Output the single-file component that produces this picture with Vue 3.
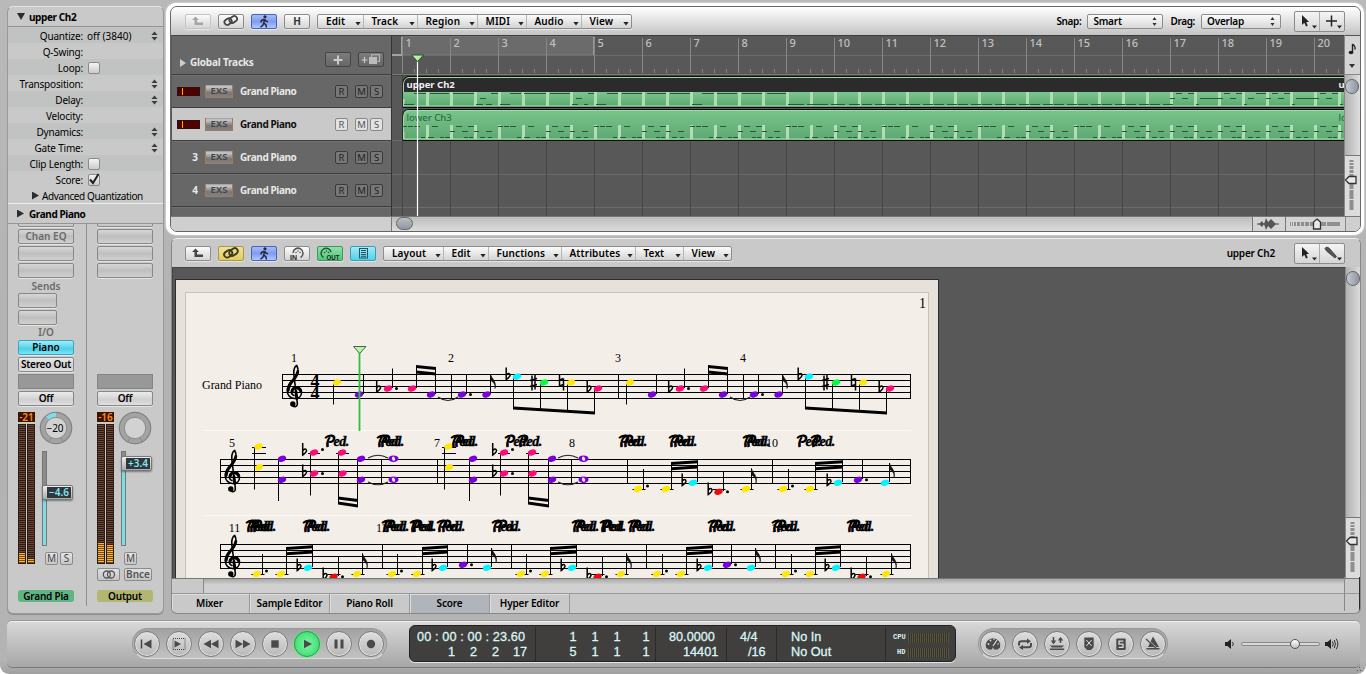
<script setup>
const params = [
  { label: 'Quantize:', value: 'off (3840)', step: true },
  { label: 'Q-Swing:' },
  { label: 'Loop:', check: 'off' },
  { label: 'Transposition:', step: true },
  { label: 'Delay:', step: true },
  { label: 'Velocity:' },
  { label: 'Dynamics:', step: true },
  { label: 'Gate Time:', step: true },
  { label: 'Clip Length:', check: 'off' },
  { label: 'Score:', check: 'on' },
]
const strips = [
  { id: 'inst', eq: 'Chan EQ', sends: true, out: true, peak: '-21', pan: '−20', db: '−4.6', thumb: 33, lit: [10, 4], solo: true, name: 'Grand Pia' },
  { id: 'out', eq: '', sends: false, out: false, peak: '-16', pan: '', db: '+3.4', thumb: 4, lit: [20, 18], solo: false, name: 'Output' },
]
const arrangeMenus = [['Edit', 45], ['Track', 54], ['Region', 60], ['MIDI', 49], ['Audio', 55], ['View', 50]]
const scoreMenus = [['Layout', 59], ['Edit', 45], ['Functions', 73], ['Attributes', 74], ['Text', 48], ['View', 48]]
const tracks = [
  { red: true, sel: false },
  { red: true, sel: true },
  { num: '3', sel: false },
  { num: '4', sel: false },
]
const bars = Array.from({ length: 20 }, (_, i) => i)
const ticks = Array.from({ length: 79 }, (_, i) => i).filter(i => i % 4)
const pillars = Array.from({ length: 39 }, (_, i) => 34 + i * 24)

/* note dashes, [x1, x2, y] relative to the timeline */
const T = 58.5
const M = 63.5
const B = 69.5
const topDashes = [[24, 36], [40, 59], [63, 84], [101, 108], [120, 131], [134, 156], [160, 180], [198, 204], [217, 228], [232, 252], [257, 276], [280, 300], [312, 324], [327, 347], [352, 372], [377, 396]]
const lowDashes = [[14, 24], [86, 93], [96, 102], [110, 120], [182, 188], [194, 198], [206, 216], [302, 312], [398, 414], [417, 438], [441, 455], [459, 470]]
const upper = [
  ...topDashes.map(s => [s[0], s[1], T]),
  ...lowDashes.map(s => [s[0], s[1], B]),
  [90, 96, M], [186, 192, M],
]
for (let x = 470; x < 774; x += 24) upper.push([x + 2, x + 12, B], [x + 15, x + 25, B])
for (let k = 0; k < 4; k++) {
  const x = 780 + k * 48
  upper.push([x + 6, x + 12, T], [x + 18, x + 24, T], [x, x + 5, M], [x + 12, x + 18, M])
  if (k % 2 === 0) upper.push([x + 30, x + 48, M])
  else upper.push([x + 30, x + 36, M], [x + 38, x + 48, T])
  upper.push([x + 26, x + 29, B])
}
const lower = []
const LT = 91.5
const LM = 96.5
const LB = 102.5
for (let k = 0; k < 20; k++) {
  const x = 12 + k * 48
  if (k < 16 && k % 2 === 0) {
    lower.push([x, x + 5, LT], [x + 6, x + 11, LT], [x + 12, x + 18, LT], [x + 30, x + 36, LT])
    lower.push([x + 19, x + 23, LB], [x + 26, x + 32, LB], [x + 38, x + 42, LB], [x + 43, x + 48, LB])
  } else {
    lower.push([x + 6, x + 12, LT], [x + 18, x + 24, LT], [x, x + 5, LM], [x + 12, x + 18, LM], [x + 24, x + 29, LM], [x + 36, x + 42, LM])
    lower.push([x + 14, x + 18, LB], [x + 19, x + 23, LB], [x + 30, x + 35, LB], [x + 38, x + 42, LB])
  }
}

/* score */
const Y = '#ffe800', P = '#7a00dc', K = '#ff0a78', C = '#00f4ff', G = '#00ff3c', R = '#f00a0a'
const heads = [], stems = [], dots = [], beams = [], flags = [], ledgers = [], ties = [], wholes = [], acc = [], barlines = []
const head = (x, y, c) => heads.push({ x, y, c })
const stem = (x, a, b) => stems.push({ x, a, b })
const beam = (x1, y1, x2, y2, h = 3) => beams.push(`${x1 - 0.5},${y1} ${x2 + 0.5},${y2} ${x2 + 0.5},${y2 + h} ${x1 - 0.5},${y1 + h}`)
const run = (x1) => { /* eighth-note group of four */
  acc.push({ t: 'flat', x: x1 - 8, y: 376 })
  for (const [d, ny, c] of [[0, 376.5, C], [27, 382.5, G], [54, 382.5, Y], [81, 388.5, K]]) {
    head(x1 + 3.5 + d, ny, c)
    stem(x1 + d, ny, 408 + d * 0.06)
  }
  acc.push({ t: 'sharp', x: x1 + 17, y: 382.5 }, { t: 'nat', x: x1 + 45.5, y: 382.5 }, { t: 'flat', x: x1 + 73, y: 388.5 })
  beam(x1, 406.5, x1 + 81, 411.5)
}
const phraseA = (o) => {
  acc.push({ t: 'flat', x: 376 + o, y: 388.5 })
  head(388 + o, 388.5, K); stem(392.5 + o, 388, 368.5); dots.push([396.5 + o, 388.5])
  head(412 + o, 388.5, K); stem(416.5 + o, 388, 365.5); head(431 + o, 394.5, P); stem(435.5 + o, 394, 367)
  beam(416.5 + o, 365, 435.5 + o, 367); beam(416.5 + o, 370.5, 435.5 + o, 372.5)
  barlines.push([451.5 + o, 374, 399])
  ties.push(`M${438 + o} 397 Q${448 + o} 404 ${458 + o} 397`)
  head(462 + o, 394.5, P); stem(466.5 + o, 394, 374); dots.push([470.5 + o, 394.5])
  head(486.5 + o, 394.5, P); stem(490.5 + o, 394, 374); flags.push([490.5 + o, 374])
}
head(337, 382.5, Y); stem(333.5, 383, 404.5); head(359, 394.5, P); stem(363.5, 394, 374)
phraseA(0); run(513.5)
barlines.push([618.5, 374, 399])
head(630, 382.5, Y); stem(626.5, 383, 404.5); head(652, 394.5, P); stem(656.5, 394, 374)
phraseA(292); run(805.5)

const phraseB = (o, p) => {
  head(258.5 + o, 446.5, Y); head(259 + o, 467.3, Y); stem(254.5 + o, 447, 489.5)
  ledgers.push([252 + o, 266 + o, 447.5], [252 + o, 266 + o, 453.5])
  head(282 + o + p, 458.7, P); head(282 + o + p, 479.7, P); stem(278.5 + o + p, 459, 501)
  acc.push({ t: 'flat', x: 302 + o, y: 451.5 }, { t: 'flat', x: 302 + o, y: 473 })
  head(314 + o, 452.5, K); head(314 + o, 473.5, K); stem(310.5 + o, 453, 495.5)
  dots.push([322.5 + o, 449.5], [322.5 + o, 473.5]); ledgers.push([308 + o, 320 + o, 453.5])
  head(342 + o, 452.5, K); head(342.5 + o, 473.5, K); stem(338.5 + o, 453, 503.5); ledgers.push([336 + o, 349 + o, 453.5])
  const q = o ? 1 : 0
  head(361 + o + q, 458.7, P); head(361 + o + q, 479.7, P); stem(357.5 + o + q, 459, 506)
  beam(338.5 + o, 496.5, 357.5 + o + q, 499); beam(338.5 + o, 501.5, 357.5 + o + q, 504.5)
  ties.push(`M${368 + o} 458 Q${378 + o} 452.5 ${388 + o} 458`, `M${368 + o} 482 Q${378 + o} 487.5 ${388 + o} 482`)
  wholes.push([393.5 + o, 458.7], [393.5 + o, 479.7])
  barlines.push([381.5 + o, 459, 484])
}
phraseB(0, 0); phraseB(190, 1)
barlines.push([437.5, 459, 484], [627.5, 459, 484], [772.5, 459, 484])

/* low phrases: dotted + beamed pair, then a red or a purple/cyan ending */
const low = (s1, s2, s3, s4, s5, red, d) => {
  const led = s => ledgers.push([s - 11, s + 2, 489.5 + d])
  head(s1 - 5.5, 489 + d, Y); stem(s1, 489 + d, 469 + d); dots.push([s1 + 4, 486 + d]); led(s1)
  head(s2 - 5.5, 489 + d, Y); stem(s2, 489 + d, 463 + d); led(s2)
  acc.push({ t: 'flat', x: s3 - 16, y: 482 + d })
  head(s3 - 4.5, 482.7 + d, C); stem(s3, 482 + d, 460.5 + d)
  beam(s2, 462 + d, s3, 460.3 + d); beam(s2, 467.3 + d, s3, 465.5 + d)
  if (red) {
    acc.push({ t: 'flat', x: s4 - 16, y: 491 + d })
    head(s4 - 5, 491.7 + d, R); stem(s4, 491 + d, 472 + d); dots.push([s4 + 4, 491.7 + d]); led(s4)
    head(s5 - 5.5, 489 + d, Y); stem(s5, 489 + d, 468.5 + d); led(s5); flags.push([s5, 468.5 + d])
  } else {
    head(s4 - 4.5, 479.7 + d, P); stem(s4, 479 + d, 460 + d); dots.push([s4 + 4, 479.7 + d])
    head(s5 - 4.5, 482.7 + d, C); stem(s5, 482 + d, 463 + d); flags.push([s5, 463 + d])
  }
}
low(643.5, 671.5, 697.5, 723.5, 751.5, true, 0)
low(788.5, 815.5, 842.5, 862.5, 889.5, false, 0)
low(262.5, 286.5, 312.5, 338.5, 362.5, true, 85)
low(397.5, 422.5, 447.5, 467.5, 491.5, false, 85)
low(526.5, 550.5, 576.5, 602.5, 626.5, true, 85)
low(662.5, 686.5, 712.5, 731.5, 755.5, false, 85)
low(791.5, 815.5, 840.5, 866.5, 891.5, true, 85)
barlines.push([382.5, 544, 569], [511.5, 544, 569], [646.5, 544, 569], [775.5, 544, 569])

const staves = [[282, 374.5], [220, 459.5], [220, 544.5]]
const measures = [['1', 294, 362], ['2', 451, 362], ['3', 618, 362], ['4', 743, 362], ['5', 232, 447], ['7', 437, 447], ['8', 572, 447], ['10', 772, 447], ['11', 234.5, 532], ['12', 382, 532], ['14', 777, 532]]
const pedRow2 = [325, 377, 380, 451, 454, 505, 518, 619, 623, 669, 673, 743, 746, 797, 811]
const pedRow3 = [246, 249, 252, 303, 306, 382, 385, 410, 412, 437, 441, 492, 497, 572, 575, 600, 602, 628, 631, 708, 712, 772, 776, 847, 850]
const peds = [...pedRow2.map(x => [x - 1, 446]), ...pedRow3.map(x => [x - 1, 531])]
const accPath = {
  flat: 'M.7 -8.5V3.5C3.5 1.8 5.4 -.5 4.1 -2C3 -3.1 1.5 -2 .7 -.8',
  sharp: 'M1.5 -7V8M4.5 -8V7M-.5 -2L6.5 -4M-.5 4L6.5 2',
  nat: 'M.5 -8V3.5L4.5 2M.5 -2.5L4.5 -4M4.5 -4V8',
}
const clef = 'M5.5 29.5C6 33.5 11.5 33 10.8 28.5L7.3 0C6.8 -5 8.5 -8.5 10.2 -9C12.5 -5 11.5 0 8 4C4 8.5 .8 11 .8 16.5C.8 21 4 24 8.3 24C12.5 24 15 21.5 15 18C15 14.5 12.5 12.5 10 12.5C7 12.5 4.8 14.5 4.8 17C4.8 19 6 20.5 7.5 21'
const clefBold = 'M11.3 -3C10.5 1.5 8 4.3 5.5 7C3 9.7 1.6 12.5 1.6 16M14.3 17C13.5 14 11.5 13.2 9.5 13.3C7.5 13.4 5.6 15 5.7 17.5M9.4 17L10.3 24'
</script>

<template>
  <div class="app">
    <div class="top">
      <aside class="side">
        <div class="shead"><i class="tri down"></i>upper Ch2</div>
        <div class="params">
          <div v-for="p in params" :key="p.label" class="prow">
            <span class="pl">{{ p.label }}</span>
            <span v-if="p.check" class="chk"><svg v-if="p.check === 'on'" width="14" height="14"><path d="M3 6.5L6 10L11.5 1" fill="none" stroke="#222" stroke-width="2" /></svg></span>
            <span v-else class="pv">{{ p.value }}</span>
            <svg v-if="p.step" class="stp" width="7" height="10"><path d="M3.5 .5L6.5 4H.5ZM3.5 9.5L6.5 6H.5Z" fill="#3c3c3c" /></svg>
          </div>
          <div class="prow adv"><i class="tri"></i>Advanced Quantization</div>
        </div>
        <div class="shead second"><i class="tri"></i>Grand Piano</div>
        <div class="strips">
          <div v-for="s in strips" :key="s.id" class="strip" :class="s.id">
            <div class="slot stub"></div>
            <div class="slot dim">{{ s.eq }}</div>
            <div class="slot"></div>
            <div class="slot"></div>
            <div class="mid">
              <template v-if="s.sends">
                <div class="cap">Sends</div>
                <div class="slot half"></div>
                <div class="slot half"></div>
                <div class="cap io">I/O</div>
                <div class="slot cyan">Piano</div>
                <div class="slot white">Stereo Out</div>
              </template>
            </div>
            <div class="group"></div>
            <div class="slot white">Off</div>
            <div class="fad">
              <div class="meterbox">
                <div class="peak">{{ s.peak }}</div>
                <div class="meters">
                  <div v-for="(l, i) in s.lit" :key="i" class="meter"><div class="lit" :style="{ height: l + 'px' }"></div></div>
                </div>
              </div>
              <div class="fright">
                <svg class="knob" width="34" height="34" viewBox="-17 -17 34 34">
                  <circle r="15.7" fill="#a3a3a3" stroke="#828282" stroke-width="1.2" />
                  <path v-if="s.pan" d="M-10 -11.4A15 15 0 0 1 0 -15.2V-10A10 10 0 0 0 -6.9 -7.5Z" fill="#7fdbe8" />
                  <path d="M-5 10L-7.5 14M5 10L7.5 14" stroke="#868686" />
                  <circle r="10.7" fill="#d2d2d2" stroke="#8a8a8a" />
                </svg>
                <span class="panv">{{ s.pan }}</span>
                <div class="track">
                  <div class="fill" :style="{ top: s.thumb + 'px' }"></div>
                  <div class="thumb" :style="{ top: s.thumb + 'px' }"><b>{{ s.db }}</b></div>
                </div>
                <div class="ms"><span class="sq">M</span><span v-if="s.solo" class="sq">S</span></div>
              </div>
            </div>
            <div class="bounce">
              <template v-if="!s.solo">
                <span class="bb l"><svg width="14" height="9"><g fill="none" stroke="#555" stroke-width="1.3"><circle cx="4.8" cy="4.5" r="3.5" /><circle cx="9" cy="4.5" r="3.5" /></g></svg></span>
                <span class="bb">Bnce</span>
              </template>
            </div>
            <div class="nm">{{ s.name }}</div>
          </div>
        </div>
      </aside>

      <main class="main">
        <section class="focus">
          <div class="arr">
            <div class="bar a">
              <span class="btn off"><svg width="14" height="10"><path d="M4.5 .5L8 4H6V6.5H12V9H3.5V4H1Z" fill="#a5a5a5" /></svg></span>
              <span class="btn"><svg width="16" height="14" viewBox="0 0 16 14"><g fill="none" stroke="#444" stroke-width="1.8"><rect x="1.5" y="5" width="7.5" height="5.5" rx="2.7" transform="rotate(-35 5 8)" /><rect x="6.5" y="3" width="8" height="5.5" rx="2.7" transform="rotate(-35 10 6)" /></g></svg></span>
              <span class="btn blue"><svg width="12" height="13" viewBox="0 0 12 13"><circle cx="7" cy="1.8" r="1.6" fill="#24283c" /><path d="M6.5 4L5.8 8L8 10L8.5 12.5M5.8 8L4.8 10.3L2.5 12.3M6.3 4.2L3.3 5.6L3 7.5M6.8 4.5L8 6.2L10 6.8" fill="none" stroke="#24283c" stroke-width="1.5" /></svg></span>
              <span class="btn">H</span>
              <span class="menus"><span v-for="m in arrangeMenus" :key="m[0]" class="mn" :style="{ width: m[1] + 'px' }">{{ m[0] }}<i></i></span></span>
              <span class="grow"></span>
              <span class="lb">Snap:</span><span class="sel s1">Smart<svg width="5" height="9"><path d="M2.5 0L4.5 3H.5ZM2.5 9L4.5 6H.5Z" fill="#333" /></svg></span>
              <span class="lb">Drag:</span><span class="sel s2">Overlap<svg width="5" height="9"><path d="M2.5 0L4.5 3H.5ZM2.5 9L4.5 6H.5Z" fill="#333" /></svg></span>
              <span class="tools">
                <span><svg width="24" height="18"><path d="M7 3V13L9.3 10.8L11 14.6L12.8 13.8L11.2 10.2L14 9.8Z" fill="#222" /><path d="M17 13.5h5l-2.5 3z" fill="#222" /></svg></span>
                <span><svg width="24" height="18"><path d="M11.5 3.5V14.5M6 9H17" stroke="#222" stroke-width="1.5" /><path d="M17 13.5h5l-2.5 3z" fill="#222" /></svg></span>
              </span>
            </div>
            <div class="abody">
              <div class="heads">
                <div class="glob"><i></i>Global Tracks<span class="grow"></span>
                  <span class="gb"><svg width="10" height="10"><path d="M5 .5V9.5M.5 5H9.5" stroke="#ccc" stroke-width="2" /></svg></span>
                  <span class="gb"><svg width="20" height="11"><path d="M.5 6H6.5M3.5 3V9" stroke="#ccc" stroke-width="1.2" /><rect x="10.5" y=".8" width="8" height="6.5" fill="none" stroke="#bbb" /><rect x="8" y="3" width="8" height="7" fill="#bbb" /></svg></span>
                </div>
                <div v-for="(t, i) in tracks" :key="i" class="trk" :class="{ sel2: t.sel }">
                  <span class="tn"><i v-if="t.red" class="red"></i>{{ t.num }}</span>
                  <span class="exs">EXS</span>
                  <span class="tname">Grand Piano</span>
                  <span class="rb">R</span><span class="rb m">M</span><span class="rb">S</span>
                </div>
                <div class="trk rest"></div>
              </div>
              <svg class="tl" width="952" height="181" viewBox="2 0 952 181">
                <defs>
                  <linearGradient id="gr" x1="0" y1="0" x2="0" y2="1"><stop offset="0" stop-color="#79c68d" /><stop offset="1" stop-color="#5da76f" /></linearGradient>
                </defs>
                <rect width="954" height="181" fill="#585858" />
                <rect x="12" y="1" width="192" height="19" fill="#6b6b6b" stroke="#7d7d7d" />
                <path d="M0 20.5H954M0 139.5H954M0 172.5H954M0 105.5H954" stroke="#6c6c6c" />
                <path d="M0 .5H954" stroke="#3d3d3d" /><path d="M0 39.5H954" stroke="#777" />
                <path d="M2 20H12V2" fill="none" stroke="#a2a2a2" stroke-width="2" /><path d="M204 2V20" stroke="#a2a2a2" stroke-width="1.6" />
                <g v-for="b in bars" :key="b">
                  <path :d="`M${12.5 + b * 48} 3V38`" stroke="#888" />
                  <path :d="`M${12.5 + b * 48} 41V181`" stroke="#464646" />
                  <text :x="15.5 + b * 48" y="12" class="bn">{{ b + 1 }}</text>
                </g>
                <path v-for="t in ticks" :key="'t' + t" :d="`M${12.5 + t * 12} 34V38`" stroke="#808080" />
                <path d="M0 40.5H954" stroke="#474747" />
                <path d="M13 72.5V48Q13 41.5 19 41.5H960V72.5Z" fill="#2b2b2b" stroke="#0c0c0c" />
                <path d="M13.5 58V49Q14 43 19 42.5H960" fill="none" stroke="#9fd5a8" />
                <rect x="13" y="57" width="942" height="14.5" fill="url(#gr)" />
                <path d="M13 71H954" stroke="#a5dcb0" />
                <path d="M13 105.5V80Q13 74.5 19 74.5H960V105.5Z" fill="url(#gr)" stroke="#0c0c0c" />
                <path d="M13.5 104V82Q14 76 19 75.5H960M13 104H954" fill="none" stroke="#a0dcab" />
                <g fill="#b0dcb6"><rect v-for="p in pillars" :key="p" :x="p + 2" y="57" width="3" height="14" /><rect v-for="p in pillars" :key="'l' + p" :x="p + 2" y="90" width="3" height="14" /><rect x="13" y="64" width="1.5" height="7" /><rect x="13" y="97" width="1.5" height="7" /></g>
                <path v-for="(n, i) in upper" :key="'u' + i" :d="`M${n[0]} ${n[2]}H${n[1]}`" stroke="#27583a" />
                <path v-for="(n, i) in lower" :key="'w' + i" :d="`M${n[0]} ${n[2]}H${n[1]}`" stroke="#27583a" />
                <text x="16.5" y="53.3" class="rn" fill="#efefef">upper Ch2</text>
                <text x="16.5" y="86.3" class="rn lo" fill="#2f6a43">lower Ch3</text>
                <text x="948.5" y="53.3" class="rn" fill="#efefef">u</text>
                <text x="948.5" y="86.3" class="rn lo" fill="#2f6a43">lo</text>
                <path d="M27.5 24V181" stroke="#fff" stroke-width="1.2" />
                <path d="M21.5 20H33.5L27.5 26.5Z" fill="#b6f5a0" stroke="#2d4d2d" />
              </svg>
              <div class="vr">
                <div class="note"><svg width="15" height="38"><path d="M7.5 17V8M7.5 8Q10.5 10 10 13.5" fill="none" stroke="#222" stroke-width="1.4" /><ellipse cx="6" cy="16.5" rx="2.3" ry="1.7" fill="#222" /><path d="M4 28h6l-3 4z" fill="#333" /></svg></div>
                <div class="vscroll"><i></i></div>
                <div class="vz"><svg width="15" height="60"><path d="M7.5 4V54" stroke="#8f8f8f" stroke-width="4" stroke-dasharray="2 1 2 1 3 1 3 1 4 1 10 1 9 1 20" /><path d="M1.5 24L5 20.5H12V27.5H5Z" fill="#e8e8e8" stroke="#333" stroke-width="1.3" /></svg></div>
              </div>
            </div>
            <div class="hs">
              <span class="hl"></span><span class="ht"><i></i></span>
              <span class="hw"><svg width="22" height="12"><path d="M0 6H22" stroke="#444" /><path d="M2 6L5 3L7 6L9 0L11 4L14 1L19 6L14 11L11 8L9 12L7 6L5 9Z" fill="#555" /></svg></span>
              <span class="hz"><svg width="59" height="14"><path d="M4 7H54" stroke="#8f8f8f" stroke-width="4" stroke-dasharray="1 1 1 1 2 1 3 1 3 1 4 1 6 1 9 1 20" /><path d="M31 2L34.5 5V12H27.5V5Z" fill="#e8e8e8" stroke="#333" stroke-width="1.3" /></svg></span>
              <span class="hc"></span>
            </div>
          </div>
        </section>

        <section class="sc">
          <div class="bar b">
            <span class="btn"><svg width="14" height="10"><path d="M4.5 .5L8 4H6V6.5H12V9H3.5V4H1Z" fill="#444" /></svg></span>
            <span class="btn yel"><svg width="18" height="14" viewBox="0 0 18 14"><g fill="none" stroke="#3f3b20" stroke-width="1.9"><rect x="2" y="5" width="8.5" height="6" rx="3" transform="rotate(-35 6 8)" /><rect x="7" y="3" width="9" height="6" rx="3" transform="rotate(-35 11.5 6)" /></g></svg></span>
            <span class="btn blue"><svg width="12" height="13" viewBox="0 0 12 13"><circle cx="7" cy="1.8" r="1.6" fill="#24283c" /><path d="M6.5 4L5.8 8L8 10L8.5 12.5M5.8 8L4.8 10.3L2.5 12.3M6.3 4.2L3.3 5.6L3 7.5M6.8 4.5L8 6.2L10 6.8" fill="none" stroke="#24283c" stroke-width="1.5" /></svg></span>
            <span class="btn"><svg width="18" height="13"><path d="M5 6A5 5 0 1 1 12.5 10.5" fill="none" stroke="#555" stroke-width="1.5" /><circle cx="10" cy="4" r=".8" fill="#555" /><circle cx="8" cy="5.5" r=".8" fill="#555" /><circle cx="12" cy="5.5" r=".8" fill="#555" /><text x="2" y="12.5" class="mini">IN</text></svg></span>
            <span class="btn grn"><svg width="22" height="13"><path d="M4.5 10.5A5 5 0 1 1 12 5" fill="none" stroke="#23573a" stroke-width="1.5" /><circle cx="7.5" cy="4" r=".8" fill="#23573a" /><circle cx="5.5" cy="5.5" r=".8" fill="#23573a" /><circle cx="9.5" cy="5.5" r=".8" fill="#23573a" /><text x="7.5" y="12.5" class="mini" textLength="13" lengthAdjust="spacingAndGlyphs">OUT</text></svg></span>
            <span class="btn cyn"><svg width="9" height="11"><rect x=".5" y=".5" width="8" height="9.5" fill="none" stroke="#2b5260" /><path d="M2 2.5H7M2 4.5H7M2 6.5H7M2 8.3H7" stroke="#2b5260" /></svg></span>
            <span class="menus"><span v-for="m in scoreMenus" :key="m[0]" class="mn" :style="{ width: m[1] + 'px' }">{{ m[0] }}<i></i></span></span>
            <span class="grow"></span>
            <span class="lb ttl">upper Ch2</span>
            <span class="tools">
              <span><svg width="24" height="18"><path d="M7 3V13L9.3 10.8L11 14.6L12.8 13.8L11.2 10.2L14 9.8Z" fill="#222" /><path d="M17 13.5h5l-2.5 3z" fill="#222" /></svg></span>
              <span><svg width="24" height="18"><path d="M5 4.5L6.5 3L9 4L16.5 12.5L15 14L6.5 7Z" fill="#555" stroke="#333" stroke-width=".8" /><path d="M17 13.5h5l-2.5 3z" fill="#222" /></svg></span>
            </span>
          </div>
          <div class="sbody">
            <svg class="page" width="1173" height="311" viewBox="172 267 1173 311">
              <rect x="172" y="267" width="1173" height="311" fill="#585858" />
              <path d="M172 267.5H1345M172.5 267V578" stroke="#444" />
              <rect x="175.5" y="279.5" width="763" height="310" fill="#e6e1da" stroke="#2c2c2c" />
              <rect x="185.5" y="292.5" width="743" height="300" fill="#f3eee8" stroke="#c6c2bc" />
              <path d="M204 430.5H911M204 515.5H911" stroke="#fbf9f6" />
              <g class="serif">
                <text x="919" y="308" font-size="14">1</text>
                <text x="202" y="389" textLength="60" font-size="12">Grand Piano</text>
                <text v-for="m in measures" :key="m[0]" :x="m[1]" :y="m[2]" font-size="12" text-anchor="middle">{{ m[0] }}</text>
                <text x="310.5" y="386.5" class="ts">4</text><text x="310.5" y="398.5" class="ts">4</text>
              </g>
              <g stroke="#000">
                <template v-for="s in staves" :key="s[1]">
                  <path v-for="l in 5" :key="l" :d="`M${s[0]} ${s[1] + (l - 1) * 6}H911`" />
                  <path :d="`M${s[0] + 0.5} ${s[1]}V${s[1] + 24}M910.5 ${s[1]}V${s[1] + 24}`" />
                </template>
                <path v-for="(b, i) in barlines" :key="'b' + i" :d="`M${b[0]} ${b[1]}V${b[2]}`" />
                <path v-for="(b, i) in stems" :key="'s' + i" :d="`M${b.x} ${b.a}V${b.b}`" />
                <path v-for="(b, i) in ledgers" :key="'g' + i" :d="`M${b[0]} ${b[2]}H${b[1]}`" />
              </g>
              <g v-for="s in staves" :key="'c' + s[1]" :transform="`translate(${s[0] + 4.5} ${s[1]})`" fill="none" stroke="#000" stroke-linecap="round">
                <path :d="clef" stroke-width="1.6" /><path :d="clefBold" stroke-width="2.9" /><circle cx="6.3" cy="29.5" r="2.7" fill="#000" stroke="none" />
              </g>
              <polygon v-for="(b, i) in beams" :key="'m' + i" :points="b" />
              <path v-for="(t, i) in ties" :key="'i' + i" :d="t" fill="none" stroke="#222" stroke-width="1.1" />
              <path v-for="(f, i) in flags" :key="'f' + i" :transform="`translate(${f[0]} ${f[1]})`" d="M0 0C1 5 6.5 7 4.5 14.5C5 9.5 2.5 8 0 6.5Z" fill="#111" stroke="#111" stroke-width=".6" />
              <ellipse v-for="(h, i) in heads" :key="'h' + i" :transform="`translate(${h.x} ${h.y}) rotate(-20)`" rx="4.3" ry="2.9" :fill="h.c" />
              <g v-for="(w, i) in wholes" :key="'o' + i" :transform="`translate(${w[0]} ${w[1]})`"><ellipse rx="5" ry="3.3" fill="#7a00dc" /><ellipse rx="1.5" ry="2.2" fill="#f3eee8" transform="rotate(-20)" /></g>
              <circle v-for="(d, i) in dots" :key="'d' + i" :cx="d[0]" :cy="d[1]" r="1.5" />
              <path v-for="(a, i) in acc" :key="'a' + i" :transform="`translate(${a.x} ${a.y})`" :d="accPath[a.t]" fill="none" stroke="#000" stroke-width="1.5" />
              <g class="ped"><text v-for="(p, i) in peds" :key="'p' + i" :x="p[0]" :y="p[1]"><tspan class="pp">𝒫</tspan><tspan dx="-2">ed.</tspan></text></g>
              <path d="M359.5 350V431" stroke="#2ebf3d" stroke-width="1.8" />
              <path d="M353.5 346.5H366L359.7 353.5Z" fill="#b9f2ae" stroke="#44664a" />
            </svg>
            <div class="vr tall">
              <div class="vscroll"><i></i></div>
              <div class="vz"><svg width="15" height="60"><path d="M7.5 4V54" stroke="#8f8f8f" stroke-width="4" stroke-dasharray="2 1 2 1 3 1 3 1 4 1 10 1 9 1 20" /><path d="M1.5 23L5 19.5H12V26.5H5Z" fill="#e8e8e8" stroke="#333" stroke-width="1.3" /></svg></div>
            </div>
          </div>
          <div class="hs2"><span class="l"></span><span class="t"></span><span class="c"></span></div>
          <div class="tabs"><span>Mixer</span><span>Sample Editor</span><span>Piano Roll</span><span class="on">Score</span><span>Hyper Editor</span></div>
        </section>
      </main>
    </div>

    <footer class="trans">
      <div class="pill p1">
        <span class="cb"><svg viewBox="-10 -10 20 20"><path d="M-5.5 -4.5V4.5" stroke-width="1.5" stroke="#444" /><path d="M4.5 -4.5V4.5L-3.5 0Z" /></svg></span>
        <span class="cb"><svg viewBox="-10 -10 20 20"><rect x="-6" y="-5.5" width="12" height="11" fill="none" stroke="#444" stroke-dasharray="1 1" /><path d="M-4.5 -3.5V3.5L2 0Z" /></svg></span>
        <span class="cb"><svg viewBox="-10 -10 20 20"><path d="M0 -4.3V4.3L-7.5 0ZM7.5 -4.3V4.3L0 0Z" /></svg></span>
        <span class="cb"><svg viewBox="-10 -10 20 20"><path d="M0 -4.3V4.3L7.5 0ZM-7.5 -4.3V4.3L0 0Z" /></svg></span>
        <span class="cb"><svg viewBox="-10 -10 20 20"><rect x="-3.7" y="-3.7" width="7.4" height="7.4" /></svg></span>
        <span class="cb play"><svg viewBox="-10 -10 20 20"><path d="M-3 -4.2V4.2L5 0Z" /></svg></span>
        <span class="cb"><svg viewBox="-10 -10 20 20"><path d="M-4.5 -4.5h3v9h-3zM1.5 -4.5h3v9h-3z" /></svg></span>
        <span class="cb"><svg viewBox="-10 -10 20 20"><circle r="4.2" /></svg></span>
      </div>
      <div class="lcd">
        <div class="c c1"><p class="smpte">00 : 00 : 00 : 23.60</p><p class="g1"><span>1</span><span>2</span><span>2</span><span>17</span></p></div>
        <div class="c c2"><p class="g2"><span>1</span><span>1</span><span>1</span><span>1</span></p><p class="g2"><span>5</span><span>1</span><span>1</span><span>1</span></p></div>
        <div class="c c3"><p>80.0000</p><p class="n">14401</p></div>
        <div class="c c4"><p>4/4</p><p class="n">/16</p></div>
        <div class="c c5"><p>No In</p><p>No Out</p></div>
        <div class="c c6"><p>CPU<i></i></p><p>HD<i></i></p></div>
      </div>
      <div class="pill p2">
        <span class="cb"><svg viewBox="-10 -10 20 20"><path d="M-7 3.5A7.3 7.3 0 1 1 7 3.5L4.5 5.5H1L0 3L-1 5.5H-4.5Z" /><path d="M0 2L4 -4" stroke="#ddd" stroke-width="1.2" /><g fill="#ddd"><circle cx="-4.5" cy="0" r=".9" /><circle cx="-2.5" cy="-3.5" r=".9" /><circle cx="1" cy="-4.7" r=".7" /><circle cx="5" cy="0" r=".8" /></g></svg></span>
        <span class="cb"><svg viewBox="-10 -10 20 20"><path d="M-6 1.5V-.5Q-6 -2.8 -3.5 -2.8H3M6 -1V1Q6 3.3 3.5 3.3H-3" fill="none" stroke="#4a4a4a" stroke-width="2" /><path d="M2 -5.5L6 -2.8L2 0ZM-2 .8L-6 3.4L-2 6Z" /></svg></span>
        <span class="cb"><svg viewBox="-10 -10 20 20"><path d="M-3.5 -7V-1M3.5 -1V-6" stroke="#4a4a4a" stroke-width="1.5" /><path d="M-6.3 -3.5H-.7L-3.5 .3ZM.7 -3.5H6.3L3.5 -7ZM-7 1.5H7L5 3.5H-5ZM-7 4.5H7V6H-7Z" /></svg></span>
        <span class="cb"><svg viewBox="-10 -10 20 20"><path d="M-4.7 -6.5H4.7V3L2 6H-2L-4.7 3Z" /><path d="M-2.7 -4L2.7 2M2.7 -4L-2.7 2" stroke="#ddd" /></svg></span>
        <span class="cb"><svg viewBox="-10 -10 20 20"><rect x="-4.7" y="-5.5" width="9.4" height="11.5" rx="1" /><path d="M2.3 -2.8H-2V.2H2V3.3H-2.3" fill="none" stroke="#ddd" stroke-width="1.3" /></svg></span>
        <span class="cb"><svg viewBox="-10 -10 20 20"><path d="M0 -7.5L6 3H-5ZM-6.5 4H6.5V5.5H-6.5Z" /><path d="M-7 -5L3 4" stroke="#4a4a4a" stroke-width="1.3" /><path d="M-4.5 -4L3 3" stroke="#ccc" stroke-width=".7" /></svg></span>
      </div>
      <div class="vol">
        <svg width="10" height="10"><path d="M0 3H2.5L6 0V10L2.5 7H0Z" fill="#222" /><path d="M7.5 3Q9 5 7.5 7" fill="none" stroke="#333" /></svg>
        <span class="vt"><i></i></span>
        <svg width="14" height="12"><path d="M0 4H2.5L6 1V11L2.5 8H0Z" fill="#222" /><path d="M7.5 3.5Q9 6 7.5 8.5M9.3 2Q11.6 6 9.3 10M11.2 .7Q14.5 6 11.2 11.3" fill="none" stroke="#333" /></svg>
      </div>
    </footer>
    <svg class="grip" width="6" height="6"><path d="M3 1h1v1h-1zM1 4h1v1h-1zM4 4h1v1h-1z" fill="#555" /></svg>
  </div>
</template>

<style>
body { background: #fff; overflow: hidden; }
</style>

<style scoped>
* { box-sizing: border-box; }
p { margin: 0; }
.app { width: 1366px; height: 674px; background: linear-gradient(#b9b9b9, #b2b2b2 60%, #b4b4b4 98%, #a0a0a0); border-radius: 0 0 9px 9px; overflow: hidden; font: 10px 'Noto Sans', sans-serif; color: #000; position: relative; }
.top { display: flex; height: 621px; }
.grow { flex: 1; }
.side { width: 157px; height: 608px; margin: 6px 1px 0 7px; background: #c9c9c9; border: 1px solid #999; border-top-color: #e3e3e3; border-radius: 6px; box-shadow: 0 1px 0 #8f8f8f; flex: none; }
.shead { height: 20px; display: flex; align-items: center; font-weight: 700; padding-left: 9px; gap: 4px; border-bottom: 1px solid #959595; letter-spacing: -.4px; }
.second { height: 21px; border-top: 1px solid #eee; }
.tri { width: 7px; height: 8px; background: #2c2c2c; clip-path: polygon(0 0, 100% 50%, 0 100%); margin-right: 1px; }
.tri.down { width: 8px; height: 7px; clip-path: polygon(0 0, 100% 0, 50% 100%); margin-right: 0; }
.prow { height: 16px; display: flex; align-items: center; padding: 1px 5px 0 0; letter-spacing: -.2px; }
.prow:nth-child(odd) { background: #c0c3c2; }
.pl { width: 75px; text-align: right; margin-right: 4px; white-space: nowrap; }
.pv { flex: 1; letter-spacing: 0; }
.chk { width: 12px; height: 12px; background: linear-gradient(#f4f4f4, #ccc); border: 1px solid #8a8a8a; border-radius: 2px; margin-left: 1px; }
.chk svg { display: block; margin: -2px 0 0 -2px; }
.prow.adv { padding-left: 24px; gap: 1px; background: #c9c9c9; letter-spacing: -.4px; }
.params { height: 176px; }
.adv .tri { margin-right: 2px; }
.strips { display: flex; }
.strip { width: 79px; padding: 0 12px 0 10px; height: 382px; position: relative; }
.inst { border-right: 1px solid #8f8f8f; }
.out { width: 76px; padding: 0 8px 0 10px; }
.strip .slot { width: 56px; height: 15px; margin-bottom: 2px; border: 1px solid #888; border-radius: 2px; background: linear-gradient(#d6d6d6, #bfbfbf 50%, #d0d0d0); box-shadow: 0 1px 0 #e5e5e5; font-weight: 600; text-align: center; line-height: 13px; white-space: nowrap; }
.strip .slot.white { background: linear-gradient(#ececec, #cfcfcf 60%, #e0e0e0); letter-spacing: -.25px; }
.strip .slot.stub { height: 3px; border-top: 0; border-radius: 0 0 2px 2px; }
.slot.dim { color: #6a6a6a; }
.strip .slot.half { width: 39px; }
.strip .slot.cyan { background: linear-gradient(#a5ebf6, #4fd0e9 60%, #7ae3f5); border-color: #35a9c2; }
.mid { height: 94px; }
.cap { text-align: center; color: #6a6a6a; height: 13px; line-height: 12px; width: 56px; font-weight: 600; }
.cap.io { height: 13px; line-height: 11px; }
.group { width: 56px; height: 15px; background: #989898; border: 1px solid #858585; margin-bottom: 2px; }
.fad { display: flex; height: 156px; margin-top: 6px; }
.meterbox { width: 17px; }
.peak { background: #3b1300; color: #ff8c1a; height: 10px; line-height: 10px; font-size: 10px; font-weight: 600; text-align: center; width: 17px; margin-bottom: 2px; }
.meters { display: flex; gap: 1px; height: 140px; }
.meter { width: 8px; background: repeating-linear-gradient(#6b4736 0 1px, #2e1a12 1px 2px); border: 1px solid #2a1d18; display: flex; align-items: flex-end; }
.lit { width: 100%; background: repeating-linear-gradient(#ffb52e 0 1px, #7a4a0a 1px 2px); }
.fright { width: 40px; margin-left: 4px; display: flex; flex-direction: column; position: relative; }
.knob { margin: -1px 0 0 0; flex: none; }
.panv { position: absolute; top: 9px; left: 1px; width: 30px; text-align: center; line-height: 14px; }
.track { width: 5px; height: 95px; margin: 6px 0 0 3px; background: #8b8b8b; border: 1px solid #777; position: relative; }
.fill { position: absolute; left: 0; right: 0; bottom: 0; background: #7fdbe6; }
.thumb { position: absolute; left: -1px; width: 31px; height: 15px; background: linear-gradient(#eee, #aaa); border: 1px solid #777; border-radius: 2px; box-shadow: 0 1px 2px #0006; padding: 1px 1px 1px 4px; }
.thumb b { display: block; background: #30373a; color: #7fe6f2; height: 11px; line-height: 11px; text-align: center; font-weight: 600; }
.ms { display: flex; gap: 2px; margin: 6px 0 0 6px; }
.sq { width: 13px; height: 13px; border: 1px solid #8a8a8a; border-radius: 2px; background: linear-gradient(#e4e4e4, #c6c6c6); font-size: 10px; line-height: 11px; text-align: center; color: #444; }
.bounce { display: flex; height: 13px; gap: 4px; }
.bb { height: 13px; width: 28px; border: 1px solid #8a8a8a; border-radius: 2px; background: linear-gradient(#e0e0e0, #c4c4c4); line-height: 11px; text-align: center; color: #555; font-weight: 600; flex: none; }
.bb.l { width: 23px; padding-top: 1px; }
.bb svg { display: block; margin: 0 auto; }
.nm { width: 56px; height: 12px; line-height: 12px; margin-top: 9px; border-radius: 3px; text-align: center; font-weight: 600; background: #5fb583; letter-spacing: -.2px; }
.out .nm { background: #b3b670; }

.main { flex: 1; display: flex; flex-direction: column; padding-left: 1px; }
.focus { margin-top: 3px; width: 1198px; height: 232px; background: #fff; border-radius: 10px; padding: 3px 3px 3px 4px; box-shadow: 0 0 2px #fff; }
.arr { width: 1191px; height: 226px; border: 1px solid #666; border-radius: 7px; overflow: hidden; background: #d0d0d0; }
.bar { display: flex; align-items: center; height: 28px; padding: 0 15px 0 14px; }
.bar.a { background: linear-gradient(#fff, #dcdcdc 60%, #c4c4c4); }
.btn { width: 26px; height: 15px; margin-right: 7px; border: 1px solid #8c8c8c; border-radius: 2px; background: linear-gradient(#fbfbfb, #d5d5d5); display: flex; align-items: center; justify-content: center; font-weight: 700; color: #333; box-shadow: 0 1px 1px #fff8; }
.btn.off { border-color: #c5c5c5; }
.btn.blue { background: linear-gradient(#a6bcf7, #7f9cf0 50%, #b3c6fb); border-color: #4663bd; }
.btn.yel { background: linear-gradient(#efe39a, #dfcc62); border-color: #a9974a; }
.btn.grn { background: linear-gradient(#8fe0a8, #52c77c); border-color: #3f9560; }
.btn.cyn { background: linear-gradient(#a2e9f5, #4fd2ea); border-color: #3a9db2; }
.mini { font: 700 7px 'Liberation Sans', sans-serif; fill: #222; }
.menus { display: flex; height: 15px; border: 1px solid #8c8c8c; border-radius: 2px; background: linear-gradient(#fbfbfb, #d3d3d3); font-weight: 600; box-shadow: 0 1px 1px #fff8; }
.mn { padding-left: 7.5px; line-height: 13px; border-left: 1px solid #b5b5b5; position: relative; letter-spacing: .12px; }
.mn:first-child { border-left: 0; padding-left: 8px; }
.mn i { position: absolute; right: 2px; bottom: 2px; width: 6px; height: 4px; background: #222; clip-path: polygon(0 0, 100% 0, 50% 100%); }
.lb { font-weight: 600; margin-right: 6px; letter-spacing: -.35px; }
.sel { height: 15px; border: 1px solid #8c8c8c; border-radius: 2px; background: linear-gradient(#fbfbfb, #d8d8d8); font-weight: 600; padding: 0 5px; display: flex; align-items: center; justify-content: space-between; margin-right: 7px; letter-spacing: -.2px; }
.s1 { width: 76px; } .s2 { width: 80px; margin-right: 13px; }
.tools { display: flex; width: 51px; height: 21px; border: 1px solid #8c8c8c; border-radius: 2px; background: linear-gradient(#f5f5f5, #d5d5d5); }
.tools span { width: 25px; display: flex; }
.tools span + span { border-left: 1px solid #aaa; }
.abody { display: flex; height: 181px; border-left: 1px solid #555; }
.heads { width: 220px; flex: none; background: #676767; display: flex; flex-direction: column; border-right: 1px solid #333; border-top: 1px solid #444; overflow: hidden; }
.glob { height: 39px; display: flex; align-items: flex-end; padding: 0 7px 6px 8px; color: #e8e8e8; font-weight: 700; flex: none; border-bottom: 1px solid #404040; line-height: 11px; letter-spacing: -.2px; white-space: nowrap; }
.glob i { width: 6px; height: 8px; background: #ccc; clip-path: polygon(0 0, 100% 50%, 0 100%); margin: 0 4px 1px 0; }
.gb { width: 26px; height: 15px; flex: none; border: 1px solid #444; border-radius: 2px; background: linear-gradient(#7d7d7d, #666); display: flex; align-items: center; justify-content: center; margin: 0 0 1px 7px; }
.trk { height: 33px; flex: none; border-bottom: 1px solid #3e3e3e; border-top: 1px solid #717171; display: flex; align-items: center; color: #e8e8e8; font-weight: 700; padding: 0 8px 1px 5px; }
.rest { height: 12px; }
.sel2 { background: #c9c9c9; color: #111; border-color: #c9c9c9; border-bottom-color: #3e3e3e; }
.tn { width: 21px; text-align: right; margin-right: 7px; }
.red { display: block; width: 23px; height: 9px; background: linear-gradient(90deg, #500000 0 4px, #ffb000 4px 5px, #500000 5px); border: 1px solid #2c1010; }
.exs { width: 28px; height: 13px; background: linear-gradient(#9a9a9a, #c9c9c9 15%, #777 60%, #8d8277); border-left: 1px solid #a77a48; border-right: 1px solid #a77a48; font-size: 9.5px; font-weight: 600; text-align: center; line-height: 12px; color: #444; margin-right: 7px; letter-spacing: .2px; }
.tname { flex: 1; letter-spacing: -.4px; }
.rb { width: 13px; height: 13px; flex: none; border: 1px solid #3a3a3a; border-radius: 2px; background: #777; color: #222; font-weight: 400; font-size: 9.5px; line-height: 11px; text-align: center; }
.rb.m { margin: 0 2px 0 7px; }
.sel2 .rb { background: #e2e2e2; border-color: #888; color: #555; }
.tl { display: block; flex: none; }
.bn { font: 500 11px 'Noto Sans', sans-serif; fill: #c0c0c0; }
.rn { font: 700 9.5px 'Noto Sans', sans-serif; }
.rn.lo { font-weight: 500; }
.vr { width: 16px; flex: none; border-left: 1px solid #888; background: #dcdcdc; display: flex; flex-direction: column; }
.note { height: 40px; border-bottom: 1px solid #888; background: #d4d4d4; border-top: 1px solid #555; }
.vscroll { height: 81px; border-bottom: 1px solid #777; background: linear-gradient(90deg, #b2b2b2, #dedede); padding: 4px 0 0 0; }
.vscroll i { display: block; width: 14px; height: 15px; border-radius: 7px; background: linear-gradient(90deg, #c4c8cf, #9096a0); border: 1px solid #666; }
.vz { flex: 1; }
.vz svg { display: block; margin-left: -1px; }
.hs { display: flex; height: 15px; border-top: 1px solid #777; background: linear-gradient(#bdbdbd, #dcdcdc); }
.hl { width: 221px; background: #cfcfcf; border-right: 1px solid #777; }
.ht { width: 860px; padding: 0 7px 0 4px; }
.ht i { display: block; width: 17px; height: 13px; border-radius: 7px; border: 1px solid #666; background: linear-gradient(#b9bdc5, #9096a0); }
.hw { width: 33px; border-left: 1px solid #777; background: #d4d4d4; padding: 1px 4px; }
.hz { width: 60px; border-left: 1px solid #777; background: #d4d4d4; }
.hc { flex: 1; border-left: 1px solid #888; background: #cfcfcf; }
.sc { width: 1190px; height: 376px; margin: 3px 0 0 5px; border: 1px solid #888; border-top-color: #eee; border-radius: 6px; background: #c9c9c9; overflow: hidden; }
.bar.b { background: #c9c9c9; padding-left: 13px; }
.bar.b .lb.ttl { margin-right: 19px; letter-spacing: -.2px; }
.sbody { display: flex; height: 311px; }
.page { flex: none; display: block; }
.serif { font-family: 'Liberation Serif', serif; }
.ts { font: 700 18px 'Liberation Serif', serif; }
.ped { font: italic 700 14px 'Liberation Serif', serif; letter-spacing: -.4px; stroke: #000; stroke-width: .4px; }
.pp { font: 700 14px 'DejaVu Math TeX Gyre', 'DejaVu Sans', serif; }
.tall .vscroll { height: 251px; }
.hs2 { display: flex; height: 15px; border-top: 1px solid #777; }
.hs2 .l { width: 32px; border-right: 1px solid #888; }
.hs2 .t { flex: 1; background: linear-gradient(#a8a8a8, #d0d0d0 40%); }
.hs2 .c { width: 16px; border-left: 1px solid #888; }
.tabs { display: flex; height: 20px; border-top: 1px solid #999; }
.tabs span { width: 80px; border-right: 1px solid #999; text-align: center; line-height: 18px; font-weight: 600; box-shadow: inset 1px 1px 0 #ddd; letter-spacing: -.15px; }
.tabs span:first-child { width: 78px; padding-right: 2px; }
.tabs .on { background: #b0b5bb; }
.trans { margin-left: 7px; width: 1353px; height: 46px; border-radius: 5px; background: linear-gradient(#d8d8d8, #a6a6a6); border-top: 1px solid #efefef; box-shadow: 0 1px 0 #777, 0 -1px 0 #999; display: flex; align-items: flex-start; }
.pill { height: 31px; border-radius: 16px; background: linear-gradient(#a2a2a2, #c2c2c2); border: 1px solid #999; border-bottom-color: #ddd; margin-top: 6px; display: flex; align-items: center; gap: 6px; padding-left: 2px; }
.p1 { margin-left: 125px; width: 255px; padding-left: 1px; }
.p2 { margin-left: 22px; width: 190px; padding-left: 1px; }
.cb { width: 26px; height: 26px; border-radius: 50%; background: linear-gradient(#dedede, #b8b8b8); border: 1px solid #7c7c7c; box-shadow: inset 0 0 0 1px #e4e4e4; display: flex; padding: 2px; }
.cb svg { width: 20px; height: 20px; fill: #4a4a4a; }
.cb.play { background: radial-gradient(#7df5a4, #2fd866); border-color: #1aa746; box-shadow: 0 0 3px #4f6; }
.lcd { margin: 3px 0 0 22px; width: 547px; height: 37px; border-radius: 6px; background: #403f3d; border: 1px solid #222; box-shadow: 0 1px 0 #e5e5e5; display: flex; font: 12.7px 'Liberation Sans', sans-serif; color: #d9f5f5; padding: 3px 0 0; -webkit-text-stroke: .3px #d9f5f5; }
.c { height: 34px; margin-top: -2px; padding-top: 3px; border-right: 1px solid #2b2a29; flex: none; }
.c p { height: 15px; line-height: 15px; white-space: pre; }
.c1 { width: 126px; padding-left: 7px; } .c2 { width: 120px; } .c3 { width: 71px; padding-left: 13px; } .c4 { width: 50px; padding-left: 13px; } .c5 { width: 109px; padding-left: 14px; }
.smpte { letter-spacing: .12px; }
.c3 .n { padding-left: 14px; } .c4 .n { padding-left: 8px; }
.c6 { border: 0; padding-left: 7px; font: 700 7px 'Liberation Mono', monospace; -webkit-text-stroke: 0; }
.c6 p { display: flex; align-items: center; justify-content: flex-start; width: 56px; }
.c6 p + p { padding-left: 4px; }
.c6 i { margin-left: auto; width: 41px; height: 10px; flex: none; background: repeating-linear-gradient(90deg, #57543c 0 1px, #35342c 1px 2px); }
.g1 { display: flex; text-align: right; } .g1 span { width: 22px; } .g1 span:first-child { width: 38px; } .g1 span:last-child { width: 28px; }
.g2 { display: flex; text-align: center; padding-left: 26px; } .g2 span { width: 22px; flex: none; } .g2 span:last-child { width: 36px; }
.vol { display: flex; align-items: center; margin: 15px 0 0 57px; height: 14px; }
.vt { width: 79px; height: 4px; border-radius: 2px; background: #d8d8d8; border: 1px solid #888; margin: 0 5px 0 6px; position: relative; }
.vt i { position: absolute; left: 48px; top: -4px; width: 10px; height: 10px; border-radius: 50%; background: linear-gradient(#fff, #b9bfca); border: 1px solid #555; }
.grip { position: absolute; right: 4px; bottom: 2px; }
</style>
